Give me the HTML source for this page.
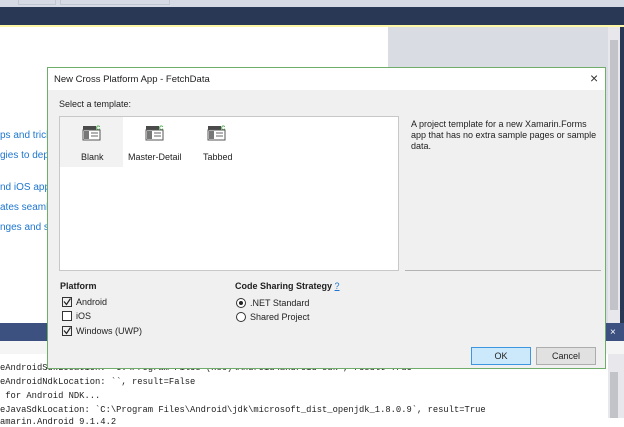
<!DOCTYPE html>
<html><head><meta charset="utf-8"><style>
*{margin:0;padding:0;box-sizing:border-box}
body{width:624px;height:418px;overflow:hidden;position:relative;background:#fff;font-family:"Liberation Sans",sans-serif;font-size:9px;color:#1e1e1e}
.a{position:absolute}
.lk{position:absolute;left:0;color:#1e76d0;font-size:10px;white-space:nowrap}
.mono{position:absolute;left:0;font-family:"Liberation Mono",monospace;font-size:8.8px;white-space:pre;color:#1e1e1e}
.cb{position:absolute;width:10px;height:10px;border:1px solid #333;background:#fff}
.rb{position:absolute;width:10px;height:10px;border:1px solid #333;border-radius:50%;background:#fff}
.t{position:absolute;white-space:nowrap}
</style></head><body>
<div class="a" style="left:0;top:0;width:624px;height:7px;background:#d5dae5"></div>
<div class="a" style="left:18px;top:0;width:38px;height:5px;border:1px solid #c0c6d2;border-top:0"></div>
<div class="a" style="left:60px;top:0;width:110px;height:5px;border:1px solid #c0c6d2;border-top:0"></div>
<div class="a" style="left:0;top:7px;width:624px;height:18px;background:#293955"></div>
<div class="a" style="left:0;top:25px;width:624px;height:2px;background:#fff7a8"></div>
<div class="a" style="left:388px;top:27px;width:220px;height:297px;background:#d9dce2"></div>
<div class="a" style="left:608px;top:27px;width:12px;height:297px;background:#e8e8ec"></div>
<div class="a" style="left:610px;top:40px;width:8px;height:270px;background:#c2c3c9"></div>
<div class="a" style="left:620px;top:27px;width:4px;height:297px;background:#293955"></div>
<div class="lk" style="top:130px">ps and tricks</div>
<div class="lk" style="top:150px">gies to deplo</div>
<div class="lk" style="top:182px">nd iOS apps</div>
<div class="lk" style="top:202px">ates seamles</div>
<div class="lk" style="top:222px">nges and se</div>
<div class="a" style="left:0;top:323px;width:624px;height:18px;background:#3c5180"></div>
<div class="a" style="left:610px;top:327px;color:#fff;font-size:10px">×</div>
<div class="a" style="left:0;top:341px;width:624px;height:13px;background:#f5f5f5"></div>
<div class="a" style="left:0;top:354px;width:624px;height:64px;background:#fff"></div>
<div class="a" style="left:608px;top:354px;width:16px;height:64px;background:#e8e8ec"></div>
<div class="a" style="left:610px;top:372px;width:8px;height:46px;background:#c2c3c9"></div>
<div class="mono" style="top:363px">eAndroidSdkLocation: `C:\Program Files (x86)\Android\android-sdk`, result=True</div>
<div class="mono" style="top:377px">eAndroidNdkLocation: ``, result=False</div>
<div class="mono" style="top:391px"> for Android NDK...</div>
<div class="mono" style="top:405px">eJavaSdkLocation: `C:\Program Files\Android\jdk\microsoft_dist_openjdk_1.8.0.9`, result=True</div>
<div class="mono" style="top:417px">amarin.Android 9.1.4.2</div>

<!-- dialog -->
<div class="a" style="left:47px;top:67px;width:559px;height:302px;background:#f0f0f0;border:1px solid #6eae6a"></div>
<div class="a" style="left:48px;top:68px;width:557px;height:22px;background:#fff"></div>
<div class="t" style="left:54px;top:74px;font-size:9.5px">New Cross Platform App - FetchData</div>
<div class="t" style="left:590px;top:70px;font-size:14px;color:#333">×</div>
<div class="t" style="left:59px;top:99px">Select a template:</div>
<div class="a" style="left:59px;top:116px;width:340px;height:155px;background:#fff;border:1px solid #c8c8c8"></div>
<div class="a" style="left:60px;top:117px;width:63px;height:50px;background:#f2f2f2"></div>
<div class="a" style="left:405px;top:270px;width:196px;height:1px;background:#b4b4b4"></div>
<div class="t" style="left:411px;top:119px;line-height:11px;font-size:9px">A project template for a new Xamarin.Forms<br>app that has no extra sample pages or sample<br>data.</div>

<svg class="a" style="left:0;top:0" width="624" height="418">
<g id="ic">
<rect x="83" y="126" width="13" height="4" fill="#4a4a4a"/>
<text x="96" y="130" font-size="6" fill="#3aa13a" font-family="Liberation Sans" font-weight="bold">C</text>
<rect x="83" y="130" width="17" height="10" fill="#fff" stroke="#555" stroke-width="1"/>
<rect x="84" y="131" width="5" height="8" fill="#777"/>
<line x1="91" y1="133" x2="98" y2="133" stroke="#666"/>
<line x1="91" y1="136" x2="98" y2="136" stroke="#666"/>
</g>
<use href="#ic" x="63"/>
<use href="#ic" x="125"/>
<path d="M64 301.5 L66.5 304.5 L70.5 298.5" stroke="#222" stroke-width="1.2" fill="none"/>
<path d="M64 330.5 L66.5 333.5 L70.5 327.5" stroke="#222" stroke-width="1.2" fill="none"/>
</svg>
<div class="t" style="left:81px;top:152px">Blank</div>
<div class="t" style="left:128px;top:152px">Master-Detail</div>
<div class="t" style="left:203px;top:152px">Tabbed</div>

<div class="t" style="left:60px;top:281px;font-weight:bold">Platform</div>
<div class="cb" style="left:62px;top:297px;background:transparent"></div>
<div class="t" style="left:76px;top:297px">Android</div>
<div class="cb" style="left:62px;top:311px"></div>
<div class="t" style="left:76px;top:311px">iOS</div>
<div class="cb" style="left:62px;top:326px;background:transparent"></div>
<div class="t" style="left:76px;top:326px">Windows (UWP)</div>

<div class="t" style="left:235px;top:281px;font-weight:bold">Code Sharing Strategy <span style="color:#1e76d0;text-decoration:underline;font-weight:normal">?</span></div>
<div class="rb" style="left:236px;top:298px"></div><div class="a" style="left:239px;top:301px;width:4px;height:4px;border-radius:50%;background:#222"></div>
<div class="t" style="left:250px;top:298px">.NET Standard</div>
<div class="rb" style="left:236px;top:312px"></div>
<div class="t" style="left:250px;top:312px">Shared Project</div>

<div class="a" style="left:471px;top:347px;width:60px;height:18px;background:#cce8fb;border:1px solid #3c96e0;text-align:center;line-height:16px">OK</div>
<div class="a" style="left:536px;top:347px;width:60px;height:18px;background:#e1e1e1;border:1px solid #adadad;text-align:center;line-height:16px">Cancel</div>
</body></html>
